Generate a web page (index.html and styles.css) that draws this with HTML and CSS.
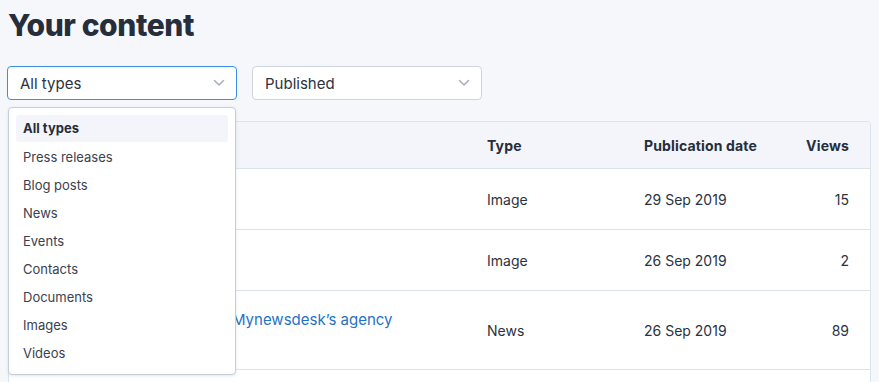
FILE: index.html
```html
<!DOCTYPE html>
<html>
<head>
<meta charset="utf-8">
<link rel="stylesheet" href="styles.css">
</head>
<body>
<h1 class="page-title">Your content</h1>
<div class="filters">
  <div class="select-wrap">
    <div class="select select-active">
      <span>All types</span>
      <svg class="chev" width="12" height="8" viewBox="0 0 12 8"><path d="M1.5 1.5 L6 6 L10.5 1.5" fill="none" stroke="#a9b1be" stroke-width="1.6" stroke-linecap="round" stroke-linejoin="round"/></svg>
    </div>
    <ul class="menu">
      <li class="menu-item selected">All types</li>
      <li class="menu-item">Press releases</li>
      <li class="menu-item">Blog posts</li>
      <li class="menu-item">News</li>
      <li class="menu-item">Events</li>
      <li class="menu-item">Contacts</li>
      <li class="menu-item">Documents</li>
      <li class="menu-item">Images</li>
      <li class="menu-item">Videos</li>
    </ul>
  </div>
  <div class="select">
    <span>Published</span>
    <svg class="chev" width="12" height="8" viewBox="0 0 12 8"><path d="M1.5 1.5 L6 6 L10.5 1.5" fill="none" stroke="#a9b1be" stroke-width="1.6" stroke-linecap="round" stroke-linejoin="round"/></svg>
  </div>
</div>
<div class="table">
  <div class="row head">
    <div class="cell">Title</div>
    <div class="cell">Type</div>
    <div class="cell">Publication date</div>
    <div class="cell num">Views</div>
  </div>
  <div class="row r1">
    <div class="cell title"><a class="link">Team photo</a></div>
    <div class="cell">Image</div>
    <div class="cell">29 Sep 2019</div>
    <div class="cell num">15</div>
  </div>
  <div class="row r1">
    <div class="cell title"><a class="link">Office</a></div>
    <div class="cell">Image</div>
    <div class="cell">26 Sep 2019</div>
    <div class="cell num">2</div>
  </div>
  <div class="row r3">
    <div class="cell title"><a class="link">Big news: Welcome to Mynewsdesk’s agency<br>program</a></div>
    <div class="cell">News</div>
    <div class="cell">26 Sep 2019</div>
    <div class="cell num">89</div>
  </div>
  <div class="row r1">
    <div class="cell title"><a class="link">Logo</a></div>
    <div class="cell">Image</div>
    <div class="cell">20 Sep 2019</div>
    <div class="cell num">7</div>
  </div>
</div>
</body>
</html>
```
FILE: styles.css
```css
* { box-sizing: border-box; }
html, body { height: 100%; }
body {
  margin: 0;
  padding: 0 8px;
  background: #f6f7fa;
  font-family: Inter, "Noto Sans", sans-serif;
  color: #2b3240;
  overflow: hidden;
}
.page-title {
  margin: 0;
  padding-top: 6px;
  font-size: 30px;
  line-height: 38px;
  font-weight: 800;
  letter-spacing: -0.4px;
  color: #262d3b;
}
.filters {
  display: flex;
  gap: 15px;
  margin-top: 22px;
  margin-left: -1px;
}
.select-wrap { position: relative; }
.select {
  width: 230px;
  height: 34px;
  display: flex;
  align-items: center;
  justify-content: space-between;
  padding: 0 11px 0 12px;
  background: #fff;
  border: 1px solid #cdd4df;
  border-radius: 4px;
  font-size: 15px;
  color: #2b3240;
}
.select-active { border-color: #3a8ee8; }
.chev { flex: none; }
.menu {
  position: absolute;
  top: 41px;
  left: 1px;
  width: 228px;
  margin: 0;
  padding: 7px;
  list-style: none;
  background: #fff;
  border: 1px solid #c6cedb;
  border-radius: 4px;
  box-shadow: 0 1px 3px rgba(40, 50, 70, 0.12);
  z-index: 10;
}
.menu-item {
  height: 28px;
  line-height: 28px;
  padding-left: 7px;
  font-size: 13px;
  color: #3a414f;
  border-radius: 3px;
}
.menu-item.selected {
  background: #f3f5fa;
  font-weight: 700;
  color: #262d3b;
  height: 27px;
  line-height: 27px;
  margin-bottom: 1px;
}
.table {
  margin-top: 21px;
  background: #fff;
  border: 1px solid #dde3ec;
  border-radius: 4px;
  overflow: hidden;
}
.row {
  display: grid;
  grid-template-columns: 1fr 157px 140px 65px;
  align-items: center;
  padding: 0 21px 0 22px;
  border-bottom: 1px solid #dde3ec;
  font-size: 14px;
}
.row.head {
  height: 47px;
  background: #f3f5fa;
  font-weight: 700;
  color: #262d3b;
}
.row.head .cell { letter-spacing: 0.15px; }
.r1 { height: 61px; }
.r3 { height: 79px; }
.cell.num { text-align: right; }
.cell.title { padding-left: 40px; }
.link {
  color: #1f72c4;
  font-size: 15px;
  line-height: 20px;
  display: inline-block;
}
```
